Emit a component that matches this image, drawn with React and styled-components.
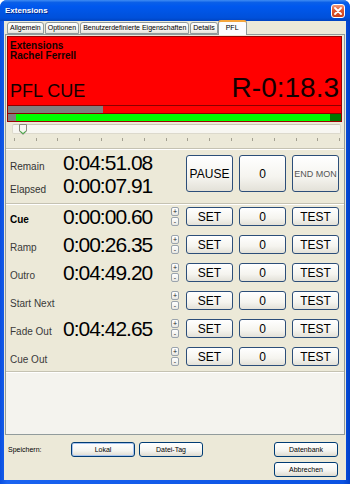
import React from 'react'
import styled, { createGlobalStyle } from 'styled-components'

const GlobalStyle = createGlobalStyle`
  html, body {
    margin: 0;
    padding: 0;
    background: #ffffff;
  }
  body {
    font-family: 'Liberation Sans', Arial, sans-serif;
    overflow: hidden;
  }
`

const tabs = ['Allgemein', 'Optionen', 'Benutzerdefinierte Eigenschaften', 'Details', 'PFL']

const rows = [
  { label: 'Cue', time: '0:00:00.60', bold: true },
  { label: 'Ramp', time: '0:00:26.35' },
  { label: 'Outro', time: '0:04:49.20' },
  { label: 'Start Next', time: '' },
  { label: 'Fade Out', time: '0:04:42.65' },
  { label: 'Cue Out', time: '' },
]

const ticks = Array.from({ length: 16 })

const App = () => {
  return (
    <Window>
      <GlobalStyle />
      <TitleBar>
        <span>Extensions</span>
        <CloseButton>
          <svg width="8" height="8" viewBox="0 0 8 8">
            <path d="M1 1 L7 7 M7 1 L1 7" stroke="#fff" strokeWidth="1.8" strokeLinecap="round" />
          </svg>
        </CloseButton>
      </TitleBar>

      <Client>
        <TabStrip>
          {tabs.map((t) => (
            <Tab key={t} $active={t === 'PFL'}>{t}</Tab>
          ))}
        </TabStrip>

        <Panel>
          <RedBox>
            <Info>
              <div>Extensions</div>
              <div>Rachel Ferrell</div>
            </Info>
            <BigRow>
              <PflLabel>PFL CUE</PflLabel>
              <Remaining>R-0:18.3</Remaining>
            </BigRow>
            <Bars>
              <TopBar>
                <Fill $color="#808080" style={{ width: '28.5%' }} />
              </TopBar>
              <GreenBar>
                <Fill $color="#808080" style={{ width: 8 }} />
                <Fill $color="#00ff00" style={{ flex: 1 }} />
                <Fill $color="#007800" style={{ width: 11 }} />
              </GreenBar>
            </Bars>
          </RedBox>

          <SliderArea>
            <Track>
              <Thumb width="8" height="11" viewBox="0 0 8 11">
                <path d="M0.5 0.5 H7.5 V7 L4 10.5 L0.5 7 Z" fill="#f7f6f1" stroke="#8c8a80" />
                <path d="M1.3 7.2 L4 9.6 L6.7 7.2" fill="none" stroke="#21a121" strokeWidth="1" />
              </Thumb>
            </Track>
            <Ticks>
              {ticks.map((_, i) => <Tick key={i} />)}
            </Ticks>
          </SliderArea>

          <RemainSection>
            <TimeBlock>
              <TimeLine>
                <Label>Remain</Label>
                <Time>0:04:51.08</Time>
              </TimeLine>
              <TimeLine>
                <Label>Elapsed</Label>
                <Time>0:00:07.91</Time>
              </TimeLine>
            </TimeBlock>
            <ButtonGroup>
              <Button $tall>PAUSE</Button>
              <Button $tall>0</Button>
              <Button $tall $small>END MON</Button>
            </ButtonGroup>
          </RemainSection>

          <RowsSection>
            {rows.map((r) => (
              <Row key={r.label}>
                <RowLabel $bold={r.bold}>{r.label}</RowLabel>
                <RowTime>{r.time}</RowTime>
                <Spinner>
                  <SpinHalf>+</SpinHalf>
                  <SpinHalf>-</SpinHalf>
                </Spinner>
                <ButtonGroup>
                  <Button>SET</Button>
                  <Button>0</Button>
                  <Button>TEST</Button>
                </ButtonGroup>
              </Row>
            ))}
          </RowsSection>

          <Filler />
        </Panel>

        <Bottom>
          <BottomRow>
            <SaveLabel>Speichern:</SaveLabel>
            <SmallButton $default>Lokal</SmallButton>
            <SmallButton style={{ marginLeft: 4 }}>Datei-Tag</SmallButton>
            <SmallButton style={{ marginLeft: 'auto' }}>Datenbank</SmallButton>
          </BottomRow>
          <BottomRow>
            <SmallButton style={{ marginLeft: 'auto' }}>Abbrechen</SmallButton>
          </BottomRow>
        </Bottom>
      </Client>
    </Window>
  )
}

export default App

const Window = styled.div`
  width: 350px;
  height: 484px;
  display: flex;
  flex-direction: column;
  background: linear-gradient(to right, #0a4fe0, #1a63f0 2%, #0b52e2 98%, #0040c8);
  border-radius: 7px 7px 0 0;
  overflow: hidden;
`

const TitleBar = styled.div`
  height: 21px;
  flex: none;
  display: flex;
  align-items: center;
  padding: 0 5px 0 5px;
  background: linear-gradient(to bottom, #3f8cf3 0%, #0a5fe8 12%, #0058ee 30%, #0054e3 60%, #0050da 85%, #0043c0 100%);
  color: #ffffff;
  font-size: 8px;
  font-weight: bold;
  text-shadow: 1px 1px 0 #0a2a8c;
`

const CloseButton = styled.div`
  margin-left: auto;
  width: 14px;
  height: 14px;
  box-sizing: border-box;
  border: 1px solid #ffffff;
  border-radius: 3px;
  background: linear-gradient(to bottom, #f09a7e, #e0582f 45%, #c9401e);
  display: flex;
  align-items: center;
  justify-content: center;
`

const Client = styled.div`
  flex: 1;
  margin: 0 4px 4px 4px;
  background: #ece9d8;
  display: flex;
  flex-direction: column;
  min-height: 0;
`

const TabStrip = styled.div`
  height: 13px;
  flex: none;
  display: flex;
  align-items: flex-end;
  padding-left: 3px;
  gap: 1px;
`

const Tab = styled.div`
  position: relative;
  box-sizing: border-box;
  height: ${(p) => (p.$active ? '15px' : '12px')};
  margin-bottom: ${(p) => (p.$active ? '-1px' : '0')};
  margin-left: ${(p) => (p.$active ? '-1px' : '0')};
  padding: 0 ${(p) => (p.$active ? '7px' : '2px')};
  border: 1px solid #919b9c;
  border-bottom: ${(p) => (p.$active ? 'none' : '1px solid #919b9c')};
  border-top: ${(p) => (p.$active ? '2px solid #f5a63c' : '1px solid #919b9c')};
  border-radius: 3px 3px 0 0;
  background: ${(p) => (p.$active ? '#fcfcfe' : 'linear-gradient(to bottom, #ffffff, #f3f3ef 70%, #e4e2d8)')};
  z-index: ${(p) => (p.$active ? 2 : 0)};
  font-size: 7px;
  line-height: ${(p) => (p.$active ? '11px' : '10px')};
  color: #000000;
  white-space: nowrap;
`

const Panel = styled.div`
  position: relative;
  z-index: 1;
  flex: 1;
  margin: 0 1px;
  border: 1px solid #919b9c;
  background: #ece9d8;
  display: flex;
  flex-direction: column;
  min-height: 0;
`

const RedBox = styled.div`
  margin: 1px 2px 0 1px;
  height: 86px;
  flex: none;
  box-sizing: border-box;
  background: #ff0000;
  border: 1px solid #9a0000;
  display: flex;
  flex-direction: column;
  color: #140000;
`

const Info = styled.div`
  padding: 4px 2px 0;
  font-size: 10px;
  font-weight: bold;
  line-height: 10px;
`

const BigRow = styled.div`
  margin-top: auto;
  display: flex;
  justify-content: space-between;
  align-items: baseline;
  padding: 0 2px;
  line-height: 28px;
`

const PflLabel = styled.span`
  font-size: 18px;
`

const Remaining = styled.span`
  font-size: 28px;
`

const Bars = styled.div`
  border-top: 1px solid #8b0000;
`

const TopBar = styled.div`
  height: 7px;
  display: flex;
  border-bottom: 1px solid #8b0000;
`

const GreenBar = styled.div`
  height: 7px;
  display: flex;
`

const Fill = styled.div`
  height: 100%;
  background: ${(p) => p.$color};
`

const SliderArea = styled.div`
  height: 26px;
  flex: none;
  box-sizing: border-box;
  padding: 2px 3px 0 6px;
`

const Track = styled.div`
  position: relative;
  height: 10px;
  box-sizing: border-box;
  border: 1px solid #dcd9cc;
  border-top-color: #c9c6b8;
  border-radius: 2px;
  background: #f7f6f1;
`

const Thumb = styled.svg`
  position: absolute;
  left: 6px;
  top: -1px;
  display: block;
`

const Ticks = styled.div`
  margin: 4px 1px 0 2px;
  display: flex;
  justify-content: space-between;
`

const Tick = styled.div`
  width: 1px;
  height: 3px;
  background: #a3a091;
`

const Separated = styled.div`
  border-top: 1px solid #c5c2b2;
  box-shadow: inset 0 1px 0 #ffffff;
`

const RemainSection = styled(Separated)`
  flex: none;
  display: flex;
  padding: 2px 0 6px 4px;
`

const TimeBlock = styled.div`
  width: 176px;
`

const TimeLine = styled.div`
  display: flex;
  align-items: baseline;
  height: 23px;
`

const Label = styled.span`
  width: 53px;
  flex: none;
  font-size: 10px;
  color: #333333;
`

const Time = styled.span`
  font-size: 21px;
  letter-spacing: -1px;
  line-height: 23px;
  color: #000000;
`

const ButtonGroup = styled.div`
  display: flex;
  gap: 6px;
  align-self: flex-start;
`

const Button = styled.div`
  width: 47px;
  height: ${(p) => (p.$tall ? '37px' : '19px')};
  margin-top: ${(p) => (p.$tall ? '4px' : '0')};
  box-sizing: border-box;
  border: 1px solid #2c4e79;
  border-radius: 3px;
  background: linear-gradient(to bottom, #ffffff, #f5f4ef 60%, #e3e1d8);
  display: flex;
  align-items: center;
  justify-content: center;
  font-size: ${(p) => (p.$small ? '9px' : '12px')};
  color: ${(p) => (p.$small ? '#555555' : '#000000')};
  white-space: nowrap;
`

const RowsSection = styled(Separated)`
  flex: none;
  display: flex;
  flex-direction: column;
  gap: 9px;
  padding: 3px 0 5px 4px;
`

const Row = styled.div`
  display: flex;
  align-items: flex-start;
  height: 19px;
`

const RowLabel = styled.div`
  width: 53px;
  flex: none;
  box-sizing: border-box;
  padding-top: 6px;
  line-height: 13px;
  font-size: 10px;
  font-weight: ${(p) => (p.$bold ? 'bold' : 'normal')};
  color: ${(p) => (p.$bold ? '#000000' : '#3a3a3a')};
  white-space: nowrap;
`

const RowTime = styled.div`
  width: 101px;
  flex: none;
  font-size: 21px;
  letter-spacing: -1px;
  line-height: 19px;
  color: #000000;
  white-space: nowrap;
`

const Spinner = styled.div`
  margin: 0 7px;
  width: 8px;
  height: 19px;
  display: flex;
  flex-direction: column;
  gap: 1px;
`

const SpinHalf = styled.div`
  flex: 1;
  box-sizing: border-box;
  border: 1px solid #9aa3ad;
  border-radius: 2px;
  background: linear-gradient(to bottom, #ffffff, #e9e8e2);
  font-size: 7px;
  line-height: 7px;
  text-align: center;
  color: #222222;
`

const Filler = styled(Separated)`
  flex: 1;
  background: #f4f3ee;
`

const Bottom = styled.div`
  flex: none;
  display: flex;
  flex-direction: column;
  gap: 5px;
  padding: 7px 8px 3px 4px;
`

const BottomRow = styled.div`
  display: flex;
  align-items: center;
`

const SaveLabel = styled.span`
  width: 63px;
  font-size: 7px;
  color: #000000;
`

const SmallButton = styled.div`
  width: 64px;
  height: 15px;
  box-sizing: border-box;
  border: 1px solid #003c74;
  border-radius: 3px;
  background: linear-gradient(to bottom, #ffffff, #f4f4f0 60%, #dedbd0);
  box-shadow: ${(p) => (p.$default ? 'inset 0 0 0 1px #a9c4ee' : 'none')};
  display: flex;
  align-items: center;
  justify-content: center;
  font-size: 7px;
  color: #000000;
`
